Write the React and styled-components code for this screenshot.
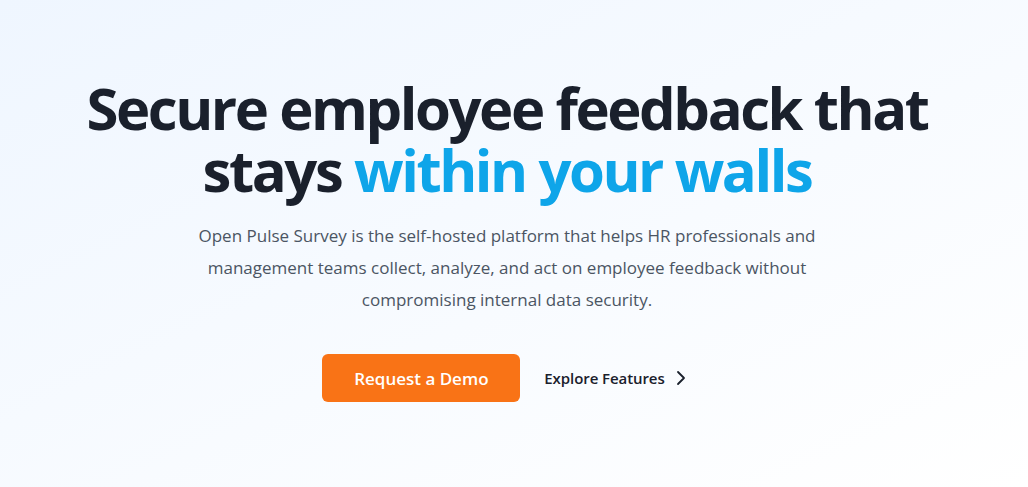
import React from 'react';
import styled, { createGlobalStyle } from 'styled-components';

const GlobalStyle = createGlobalStyle`
  html, body {
    margin: 0;
    padding: 0;
  }
  body {
    font-family: "Open Sans", "Noto Sans", sans-serif;
    -webkit-font-smoothing: antialiased;
  }
`;

const Hero = styled.section`
  min-height: 487px;
  box-sizing: border-box;
  padding: 77px 14px 0 0;
  background: linear-gradient(to bottom right, #eff6ff, #ffffff);
  display: flex;
  flex-direction: column;
  align-items: center;
  text-align: center;
`;

const Title = styled.h1`
  margin: 0;
  font-size: 58px;
  line-height: 62px;
  font-weight: 700;
  letter-spacing: -0.042em;
  color: #1a202c;
`;

const Accent = styled.span`
  color: #0ea5e9;
`;

const Lead = styled.p`
  margin: 19px 0 0;
  max-width: 626px;
  font-size: 17px;
  line-height: 32px;
  color: #4b5563;
`;

const Actions = styled.div`
  margin-top: 38px;
  display: flex;
  align-items: center;
  gap: 24px;
`;

const PrimaryButton = styled.a`
  display: inline-flex;
  align-items: center;
  justify-content: center;
  width: 198px;
  height: 48px;
  border-radius: 6px;
  background: #f97316;
  color: #ffffff;
  font-size: 17px;
  font-weight: 600;
  text-decoration: none;
`;

const LinkButton = styled.a`
  display: inline-flex;
  align-items: center;
  gap: 11px;
  color: #1a202c;
  font-size: 15px;
  font-weight: 600;
  letter-spacing: -0.005em;
  text-decoration: none;
`;

const Chevron = () => (
  <svg width="16" height="16" viewBox="0 0 16 16" fill="none">
    <path d="M2 2l6 6-6 6" stroke="#1a202c" strokeWidth="1.8" strokeLinecap="round" strokeLinejoin="round" />
  </svg>
);

const App = () => (
  <>
    <GlobalStyle />
    <Hero>
      <Title>
        Secure employee feedback that
        <br />
        stays <Accent>within your walls</Accent>
      </Title>
      <Lead>
        Open Pulse Survey is the self-hosted platform that helps HR professionals and management
        teams collect, analyze, and act on employee feedback without compromising internal data
        security.
      </Lead>
      <Actions>
        <PrimaryButton href="#">Request a Demo</PrimaryButton>
        <LinkButton href="#">
          Explore Features
          <Chevron />
        </LinkButton>
      </Actions>
    </Hero>
  </>
);

export default App;
